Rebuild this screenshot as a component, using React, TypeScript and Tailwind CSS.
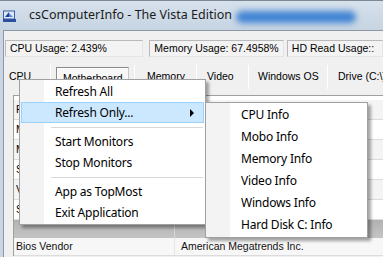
const ui = "font-['Liberation_Sans',Arial,sans-serif]";
const menuFont = "font-['Noto_Sans','Open_Sans',sans-serif]";

const rows = [
  { label: "Product", bg: "bg-[#f4f4f4]" },
  { label: "Manufacturer", bg: "bg-white" },
  { label: "Model", bg: "bg-[#f4f4f4]" },
  { label: "Serial Number", bg: "bg-white" },
  { label: "Version", bg: "bg-[#f4f4f4]" },
  { label: "SKU", bg: "bg-white" },
];

const tabs = [
  { label: "CPU", w: "w-[46px]", pl: "pl-[5px]" },
  { label: "Motherboard", w: "w-[83px]", pl: "pl-[5px]", selected: true },
  { label: "Memory", w: "w-[61px]", pl: "pl-[12px]" },
  { label: "Video", w: "w-[51px]", pl: "pl-[10px]" },
  { label: "Windows OS", w: "w-[78px]", pl: "pl-[9px]" },
  { label: "Drive (C:\\)", w: "w-[80px]", pl: "pl-[10px]" },
];

const mainItems: (string | null)[] = [
  "Refresh All",
  "Refresh Only...",
  null,
  "Start Monitors",
  "Stop Monitors",
  null,
  "App as TopMost",
  "Exit Application",
];

const subItems = ["CPU Info", "Mobo Info", "Memory Info", "Video Info", "Windows Info", "Hard Disk C: Info"];

function AppIcon() {
  return (
    <svg width="13" height="13" viewBox="0 0 13 13" className="shrink-0">
      <rect x="0.5" y="1" width="11" height="8" fill="#dfe8f5" stroke="#3a5fa8" />
      <path d="M2 7 L6 2 L6 7 Z" fill="#1f3f9a" />
      <path d="M6 3 L10 7 L6 7 Z" fill="#5c86d6" />
      <rect x="0" y="9" width="13" height="3" fill="#2d4f9e" />
    </svg>
  );
}

const box =
  "h-[17px] flex items-center pl-[4px] border border-[#b9b9b9] border-b-[#e4e4e4] border-r-[#e4e4e4] bg-[#f3f3f3] whitespace-nowrap overflow-hidden";

export default function App() {
  return (
    <div className="relative w-[383px] h-[257px] overflow-hidden bg-[#c8d6e4]">
      {/* glass title bar */}
      <div className="h-[30px] flex items-center border-t border-[#7d8894] bg-gradient-to-b from-[#d6e1ec] to-[#c6d4e2]">
        <div className="pl-[3px] pt-[2px]">
          <AppIcon />
        </div>
        <span className={`ml-[13px] text-[12.5px] text-[#1b1b1b] whitespace-nowrap ${menuFont}`}>
          csComputerInfo - The Vista Edition
        </span>
        <div className="ml-[4px] mt-[2px] h-[12px] w-[120px] rounded-full bg-[#3f83d3] blur-[3px]" />
      </div>

      {/* client area */}
      <div className={`ml-[3px] h-[227px] border-l border-t border-[#8c98a4] bg-[#f0f0f0] text-[10.5px] text-black ${ui}`}>
        <div className="flex pt-[9px] pl-[1px]">
          <div className={`${box} w-[144px]`}>CPU Usage: 2.439%</div>
          <div className={`${box} ml-[6px] w-[140px]`}>Memory Usage: 67.4958%</div>
          <div className={`${box} ml-[3px] w-[100px]`}>HD Read Usage::</div>
        </div>

        <div className="flex mt-[6px] h-[28px]">
          {tabs.map((t, i) => (
            <div key={t.label} className="flex h-full shrink-0">
              <div className={`${t.w} h-full flex items-center ${t.selected ? "" : t.pl} shrink-0`}>
                {t.selected ? (
                  <div className="ml-[5px] mt-[4px] h-[24px] w-[73px] flex items-center pl-[6px] border border-[#8a8a8a] border-r-[#c8c8c8] bg-[#f7f7f7] shadow-[inset_1px_1px_0_#ffffff]">
                    {t.label}
                  </div>
                ) : (
                  <span className="whitespace-nowrap">{t.label}</span>
                )}
              </div>
              {i < tabs.length - 1 && <div className="w-[1px] mt-[2px] h-[24px] bg-[#c4c4c4] border-r border-white" />}
            </div>
          ))}
        </div>

        <div className="ml-[9px] mt-[4px] border-l border-t border-[#a0a0a0] bg-white pt-[4px]">
          {rows.map((r) => (
            <div key={r.label} className={`flex h-[20px] border-b border-[#dcdcdc] ${r.bg}`}>
              <div className="w-[161px] pl-[2px] flex items-center border-r border-[#e6e6e6]">{r.label}</div>
              <div className="pl-[6px] flex items-center" />
            </div>
          ))}
          <div className="flex h-[18px] bg-gradient-to-b from-[#b2b2b2] to-[#c4c4c4]">
            <div className="w-[161px] border-r border-[#d8d8d8]" />
          </div>
          <div className="flex h-[18px] border-b border-[#dcdcdc] bg-[#f7f7f7] text-[#111]">
            <div className="w-[161px] pl-[2px] flex items-center border-r border-[#e6e6e6]">Bios Vendor</div>
            <div className="pl-[6px] flex items-center">American Megatrends Inc.</div>
          </div>
        </div>
      </div>

      {/* context menu */}
      <div className={`absolute left-[19px] top-[79px] w-[187px] border border-[#a0a0a0] bg-white py-[1px] px-[1px] shadow-[3px_3px_3px_rgba(0,0,0,0.35)] text-[12px] text-black ${menuFont}`}>
        <div className="absolute left-0 top-0 bottom-0 w-[24px] bg-[#f3f3f3]" />
        {mainItems.map((it, i) =>
          it === null ? (
            <div key={i} className="relative h-[8px] flex items-center pl-[30px] pr-[1px]">
              <div className="h-[1px] w-full bg-[#d7d7d7]" />
            </div>
          ) : (
            <div
              key={i}
              className={`relative h-[21px] flex items-center ${
                it === "Refresh Only..." ? "bg-[#cce8ff] border border-[#99d1ff] pl-[33px]" : "pl-[34px]"
              }`}
            >
              <span className="tracking-[-0.2px]">{it}</span>
              {it === "Refresh Only..." && (
                <svg width="5" height="8" viewBox="0 0 5 8" className="absolute right-[8px] top-[6px]">
                  <path d="M0 0 L4 4 L0 8 Z" fill="#000" />
                </svg>
              )}
            </div>
          )
        )}
      </div>

      {/* submenu */}
      <div className={`absolute left-[205px] top-[102px] w-[163px] border border-[#a0a0a0] bg-white py-[1px] shadow-[3px_3px_3px_rgba(0,0,0,0.35)] text-[12px] text-black ${menuFont}`}>
        <div className="absolute left-0 top-0 bottom-0 w-[24px] bg-[#f3f3f3]" />
        {subItems.map((it) => (
          <div key={it} className="relative h-[22px] flex items-center pl-[35px]">
            <span className="tracking-[-0.2px]">{it}</span>
          </div>
        ))}
      </div>
    </div>
  );
}
